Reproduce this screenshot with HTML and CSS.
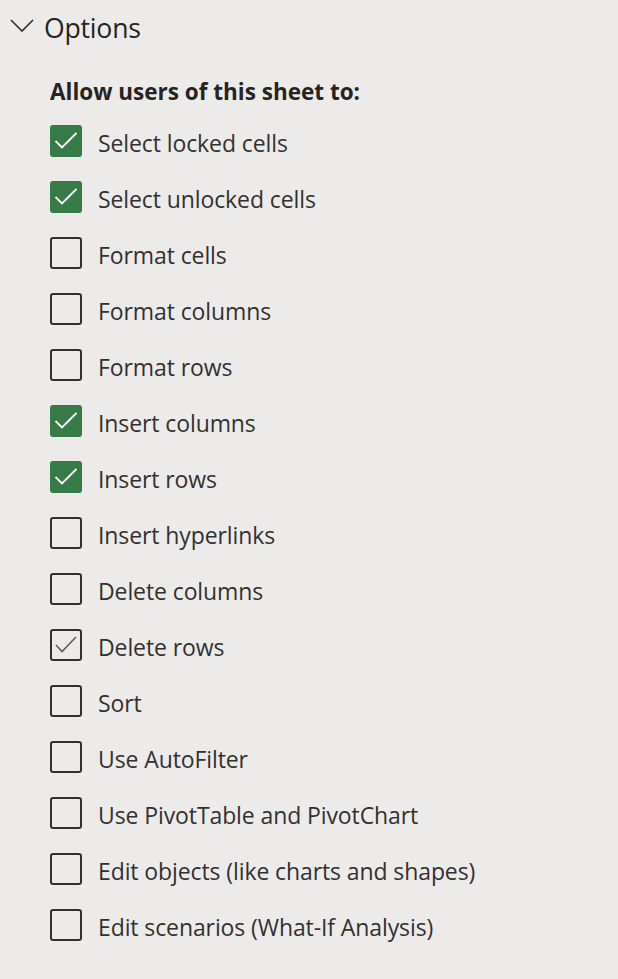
FILE: index.html
```html
<!DOCTYPE html>
<html>
<head>
<meta charset="utf-8">
<link rel="stylesheet" href="styles.css">
</head>
<body>
<div class="panel">
  <div class="header">
    <svg class="chev" width="24" height="14" viewBox="0 0 24 14"><path d="M1 1 L12 12 L23 1" fill="none" stroke="#323130" stroke-width="1.6"/></svg>
    <span class="title">Options</span>
  </div>
  <div class="section">
    <div class="label">Allow users of this sheet to:</div>
    <ul class="list">
      <li class="row"><span class="box on"><svg viewBox="0 0 32 32"><path d="M5.5 16 L12 22.5 L26.5 8" fill="none" stroke="#fff" stroke-width="1.8"/></svg></span><span class="txt">Select locked cells</span></li>
      <li class="row"><span class="box on"><svg viewBox="0 0 32 32"><path d="M5.5 16 L12 22.5 L26.5 8" fill="none" stroke="#fff" stroke-width="1.8"/></svg></span><span class="txt">Select unlocked cells</span></li>
      <li class="row"><span class="box"></span><span class="txt">Format cells</span></li>
      <li class="row"><span class="box"></span><span class="txt">Format columns</span></li>
      <li class="row"><span class="box"></span><span class="txt">Format rows</span></li>
      <li class="row"><span class="box on"><svg viewBox="0 0 32 32"><path d="M5.5 16 L12 22.5 L26.5 8" fill="none" stroke="#fff" stroke-width="1.8"/></svg></span><span class="txt">Insert columns</span></li>
      <li class="row"><span class="box on"><svg viewBox="0 0 32 32"><path d="M5.5 16 L12 22.5 L26.5 8" fill="none" stroke="#fff" stroke-width="1.8"/></svg></span><span class="txt">Insert rows</span></li>
      <li class="row"><span class="box"></span><span class="txt">Insert hyperlinks</span></li>
      <li class="row"><span class="box"></span><span class="txt">Delete columns</span></li>
      <li class="row"><span class="box hover"><svg viewBox="0 0 28 28"><path d="M4 14 L10 20.5 L24 6" fill="none" stroke="#605e5c" stroke-width="1.6"/></svg></span><span class="txt">Delete rows</span></li>
      <li class="row"><span class="box"></span><span class="txt">Sort</span></li>
      <li class="row"><span class="box"></span><span class="txt">Use AutoFilter</span></li>
      <li class="row"><span class="box"></span><span class="txt">Use PivotTable and PivotChart</span></li>
      <li class="row"><span class="box"></span><span class="txt">Edit objects (like charts and shapes)</span></li>
      <li class="row"><span class="box"></span><span class="txt">Edit scenarios (What-If Analysis)</span></li>
    </ul>
  </div>
</div>
</body>
</html>
```

FILE: styles.css
```css
html, body {
  margin: 0;
  padding: 0;
  background: #edebe9;
}
body {
  width: 618px;
  height: 979px;
  overflow: hidden;
  font-family: "Open Sans", "Noto Sans", sans-serif;
  color: #323130;
}
.header {
  display: flex;
  align-items: center;
  height: 56px;
  padding-left: 10px;
}
.chev {
  margin-right: 10px;
  margin-top: -4px;
}
.title {
  font-size: 26.6px;
  letter-spacing: -0.2px;
  color: #252423;
}
.section {
  padding-left: 50px;
}
.label {
  font-weight: 700;
  font-size: 22.5px;
  height: 43px;
  line-height: 44px;
  margin-top: 14px;
  color: #252423;
}
.list {
  list-style: none;
  margin: 0;
  padding: 0;
}
.row {
  display: flex;
  align-items: center;
  height: 56px;
  font-size: 23px;
  letter-spacing: -0.1px;
  line-height: 32px;
}
.txt {
  padding-top: 4px;
}
.box {
  width: 32px;
  height: 32px;
  box-sizing: border-box;
  border: 2px solid #323130;
  border-radius: 3px;
  margin-right: 16px;
  flex: none;
  display: flex;
}
.box svg {
  width: 100%;
  height: 100%;
}
.box.on {
  background: #367a48;
  border: none;
}
```
